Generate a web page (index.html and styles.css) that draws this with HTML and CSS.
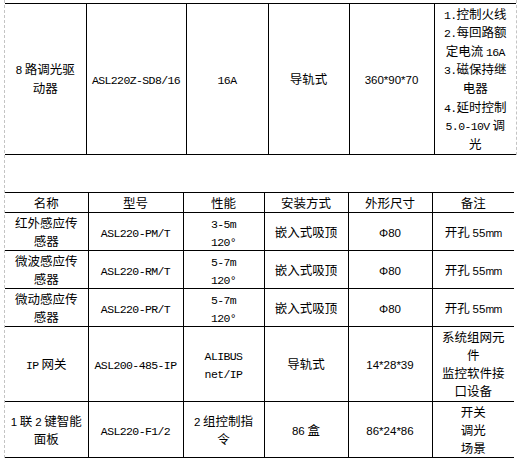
FILE: index.html
```html
<!DOCTYPE html>
<html lang="zh-CN">
<head>
<meta charset="utf-8">
<title>产品表</title>
<link rel="stylesheet" href="styles.css">
</head>
<body>
<div class="page">
  <div class="sheet1">
    <table class="grid t1">
      <colgroup>
        <col class="a1"><col class="a2"><col class="a3"><col class="a4"><col class="a5"><col class="a6">
      </colgroup>
      <tr class="r-big">
        <td><span class="num">8</span> 路调光驱<br>动器</td>
        <td><span class="en">ASL220Z-SD8/16</span></td>
        <td><span class="en">16A</span></td>
        <td>导轨式</td>
        <td><span class="num">360*90*70</span></td>
        <td><span class="en">1.</span>控制火线<br><span class="en">2.</span>每回路额<br>定电流 <span class="en">16A</span><br><span class="en">3.</span>磁保持继<br>电器<br><span class="en">4.</span>延时控制<br><span class="en">5.0-10V</span> 调<br>光</td>
      </tr>
    </table>
  </div>

  <table class="grid t2">
    <colgroup>
      <col class="b1"><col class="b2"><col class="b3"><col class="b4"><col class="b5"><col class="b6">
    </colgroup>
    <tr class="r-head">
      <td>名称</td><td>型号</td><td>性能</td><td>安装方式</td><td>外形尺寸</td><td>备注</td>
    </tr>
    <tr class="r-two">
      <td>红外感应传<br>感器</td>
      <td><span class="en">ASL220-PM/T</span></td>
      <td><span class="en">3-5m</span><br><span class="en">120°</span></td>
      <td>嵌入式吸顶</td>
      <td><span class="num">Φ80</span></td>
      <td>开孔 <span class="num">55<span class="mm">mm</span></span></td>
    </tr>
    <tr class="r-two">
      <td>微波感应传<br>感器</td>
      <td><span class="en">ASL220-RM/T</span></td>
      <td><span class="en">5-7m</span><br><span class="en">120°</span></td>
      <td>嵌入式吸顶</td>
      <td><span class="num">Φ80</span></td>
      <td>开孔 <span class="num">55<span class="mm">mm</span></span></td>
    </tr>
    <tr class="r-two">
      <td>微动感应传<br>感器</td>
      <td><span class="en">ASL220-PR/T</span></td>
      <td><span class="en">5-7m</span><br><span class="en">120°</span></td>
      <td>嵌入式吸顶</td>
      <td><span class="num">Φ80</span></td>
      <td>开孔 <span class="num">55<span class="mm">mm</span></span></td>
    </tr>
    <tr class="r-four">
      <td><span class="en">IP</span> 网关</td>
      <td><span class="en">ASL200-485-IP</span></td>
      <td><span class="en">ALIBUS</span><br><span class="en">net/IP</span></td>
      <td>导轨式</td>
      <td><span class="num">14*28*39</span></td>
      <td>系统组网元<br>件<br>监控软件接<br>口设备</td>
    </tr>
    <tr class="r-three">
      <td><span class="num">1</span> 联 <span class="num">2</span> 键智能<br>面板</td>
      <td><span class="en">ASL220-F1/2</span></td>
      <td><span class="num">2</span> 组控制指<br>令</td>
      <td><span class="num">86</span> 盒</td>
      <td><span class="num">86*24*86</span></td>
      <td>开关<br>调光<br>场景</td>
    </tr>
  </table>
</div>
</body>
</html>
```

FILE: styles.css
```css
html, body {
  margin: 0;
  padding: 0;
  background: #ffffff;
}

.page {
  margin-left: 4px;
  width: 512px;
  height: 458px;
  border-left: 1px dashed #c4c4c4;
  font-family: "Noto Sans CJK SC", "Liberation Sans", sans-serif;
  font-size: 12.5px;
  color: #000000;
}

.sheet1 {
  width: 511px;
  padding-top: 3px;
  border-right: 1px dashed #c4c4c4;
}

.grid {
  border-collapse: collapse;
  table-layout: fixed;
  border-top: 1px solid #000;
  border-bottom: 1px solid #000;
  border-left: none;
  border-right: none;
}

.grid td {
  border: 1px solid #000;
  padding: 0 1px;
  text-align: center;
  vertical-align: middle;
  white-space: nowrap;
  line-height: 18px;
  overflow: hidden;
}

.grid td:first-child {
  border-left: none;
}

.grid td:last-child {
  border-right: none;
}

.t1 {
  width: 511px;
}

.r-big { height: 151px; }
.r-big td { line-height: 18.6px; }

.a1 { width: 81px; }
.a2 { width: 100px; }
.a3 { width: 82px; }
.a4 { width: 81px; }
.a5 { width: 85px; }
.a6 { width: 82px; }

.t2 {
  width: 509px;
  margin-top: 37px;
}

.r-head { height: 20px; }
.r-two { height: 38px; }
.r-four { height: 75px; }
.r-three { height: 56px; }

.b1 { width: 83px; }
.b2 { width: 95px; }
.b3 { width: 81px; }
.b4 { width: 84px; }
.b5 { width: 84px; }
.b6 { width: 82px; }

.en {
  font-family: "Liberation Mono", monospace;
  font-size: 11.5px;
  letter-spacing: -0.6px;
  line-height: 1;
}

.num {
  font-family: "Liberation Sans", sans-serif;
  font-size: 11.5px;
  line-height: 1;
}

.mm {
  letter-spacing: -0.6px;
  font-size: 10.5px;
}
```
